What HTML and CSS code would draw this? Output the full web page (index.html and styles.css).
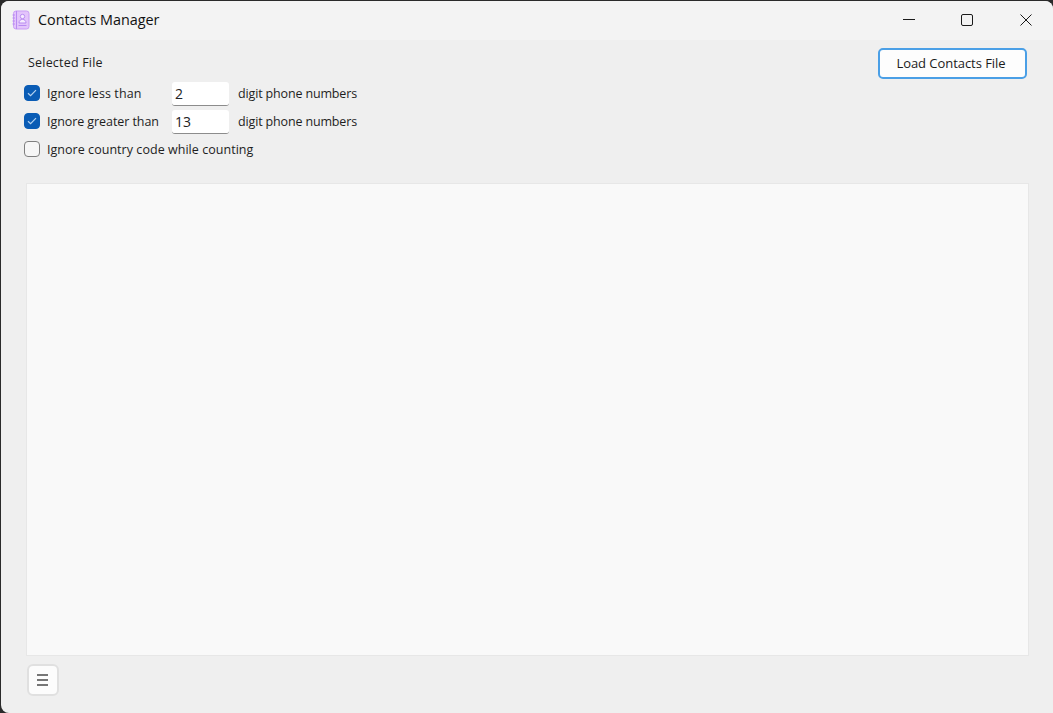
FILE: index.html
```html
<!DOCTYPE html>
<html lang="en">
<head>
<meta charset="utf-8">
<title>Contacts Manager</title>
<link rel="stylesheet" href="styles.css">
</head>
<body>
<div class="window">
  <header class="titlebar">
    <div class="title-left">
      <svg class="app-icon" width="18" height="20" viewBox="0 0 18 20">
        <rect x="1.5" y="1" width="15.5" height="18" rx="2.5" fill="#e3c4fb" stroke="#c99df5" stroke-width="1"/>
        <path d="M4.5 1v18" stroke="#b98cf2" stroke-width="1"/>
        <path d="M0.5 5h2.5M0.5 8h2.5M0.5 11h2.5M0.5 14h2.5" stroke="#b98cf2" stroke-width="1"/>
        <circle cx="10.5" cy="6.5" r="2.2" fill="#f6ecfe" stroke="#b98cf2" stroke-width="1"/>
        <path d="M7 13c0-2.4 1.5-3.6 3.5-3.6S14 10.600 14 13z" fill="#f6ecfe" stroke="#b98cf2" stroke-width="1"/>
        <path d="M6.500 15.500h8" stroke="#b98cf2" stroke-width="1.200"/>
      </svg>
      <span class="title-text">Contacts Manager</span>
    </div>
    <div class="window-controls">
      <button class="win-btn" aria-label="Minimize"><svg width="12" height="12" viewBox="0 0 12 12"><path d="M0 5.500h12" stroke="#1a1a1a" stroke-width="1"/></svg></button>
      <button class="win-btn" aria-label="Maximize"><svg width="12" height="12" viewBox="0 0 12 12"><rect x="0.500" y="0.500" width="11" height="11" rx="1.500" fill="none" stroke="#1a1a1a" stroke-width="1"/></svg></button>
      <button class="win-btn" aria-label="Close"><svg width="12" height="12" viewBox="0 0 12 12"><path d="M0.500 0.500l11 11M11.500 0.500l-11 11" stroke="#1a1a1a" stroke-width="1"/></svg></button>
    </div>
  </header>
  <main class="content">
    <section class="top">
      <div class="options">
        <div class="selected-file">Selected File</div>
        <div class="row">
          <span class="check checked"><svg width="10" height="8" viewBox="0 0 10 8"><path d="M1 4.200l2.600 2.500L9 1.200" fill="none" stroke="#b5d3f0" stroke-width="1.200"/></svg></span>
          <span class="label label-less">Ignore less than</span>
          <input class="num" type="text" value="2">
          <span class="suffix">digit phone numbers</span>
        </div>
        <div class="row">
          <span class="check checked"><svg width="10" height="8" viewBox="0 0 10 8"><path d="M1 4.200l2.600 2.500L9 1.200" fill="none" stroke="#b5d3f0" stroke-width="1.200"/></svg></span>
          <span class="label label-greater">Ignore greater than</span>
          <input class="num" type="text" value="13">
          <span class="suffix">digit phone numbers</span>
        </div>
        <div class="row">
          <span class="check"></span>
          <span class="label">Ignore country code while counting</span>
        </div>
      </div>
      <button class="load-btn">Load Contacts File</button>
    </section>
    <section class="panel"></section>
    <footer class="footer">
      <button class="menu-btn" aria-label="Menu"><svg width="11" height="12" viewBox="0 0 11 12"><path d="M0 1h11M0 6h11M0 11h11" stroke="#4a4a4a" stroke-width="1.600"/></svg></button>
    </footer>
  </main>
</div>
</body>
</html>
```

FILE: styles.css
```css
* { box-sizing: border-box; }
html, body { margin: 0; height: 100%; }
body {
  background: #2a2a2a;
  font-family: "Open Sans", "Noto Sans", sans-serif;
  color: #1b1b1b;
  overflow: hidden;
}
.window {
  margin: 1px 0 0 1px;
  height: 712px;
  display: flex;
  flex-direction: column;
  background: #efefef;
  border-radius: 8px 8px 0 8px;
  overflow: hidden;
}
.titlebar {
  height: 39px;
  flex: none;
  display: flex;
  justify-content: space-between;
  align-items: center;
  padding-bottom: 1px;
  background: #f3f3f3;
}
.title-left { display: flex; align-items: center; padding-left: 11px; gap: 8px; }
.app-icon { display: block; }
.title-text { font-size: 14.4px; letter-spacing: -0.03px; color: #111; margin-top: -2px; }
.window-controls { display: flex; align-items: center; padding-right: 21px; gap: 47px; }
.win-btn { width: 12px; height: 12px; padding: 0; border: 0; background: none; display: block; }
.win-btn:first-child { margin-right: -1px; }
.win-btn svg { display: block; }
.content { flex: 1; display: flex; flex-direction: column; padding: 0 24px 0 25px; min-height: 0; }
.top { height: 143px; flex: none; display: flex; justify-content: space-between; align-items: flex-start; }
.options { margin-left: -2px; display: flex; flex-direction: column; font-size: 12.5px; color: #1e1e1e; }
.selected-file { height: 39px; padding: 14px 0 0 4px; line-height: 18px; letter-spacing: 0.2px; }
.row { height: 28px; display: flex; align-items: center; letter-spacing: 0.04px; }
.check {
  width: 16px; height: 16px; flex: none;
  border: 1px solid #7f7f7f; border-radius: 4px; background: #f6f6f6;
  display: flex; align-items: center; justify-content: center;
}
.check.checked { background: #0a5cb5; border-color: #0a5cb5; }
.label { margin: 1px 0 0 7px; width: 125px; white-space: nowrap; }
.label-less { letter-spacing: 0.1px; }
.label-greater { letter-spacing: -0.07px; }
.num {
  width: 57px; height: 24px; flex: none; margin-top: 2px;
  border: 0; border-bottom: 1px solid #8c8c8c; border-radius: 3px;
  background: #fff; padding: 0 3px;
  font: 14px "Open Sans", sans-serif; color: #222;
}
.suffix { margin-left: 9px; letter-spacing: -0.15px; }
.load-btn {
  margin-top: 8px; margin-right: 2px;
  width: 149px; height: 31px;
  padding: 0 3px 2px 0;
  border: 2px solid #4a9fe6; border-radius: 5px;
  background: #fdfdfd; color: #1b1b1b;
  font: 13px "Open Sans", sans-serif; letter-spacing: -0.05px;
}
.panel { height: 473px; flex: none; background: #f9f9f9; border: 1px solid #e7e7e7; }
.footer { padding: 8px 0 0 1px; }
.menu-btn {
  width: 32px; height: 32px; padding: 0 2px 1px 0;
  border: 2px solid #e0e0e0; border-radius: 6px; background: #fcfcfc;
  display: flex; align-items: center; justify-content: center;
}
```
